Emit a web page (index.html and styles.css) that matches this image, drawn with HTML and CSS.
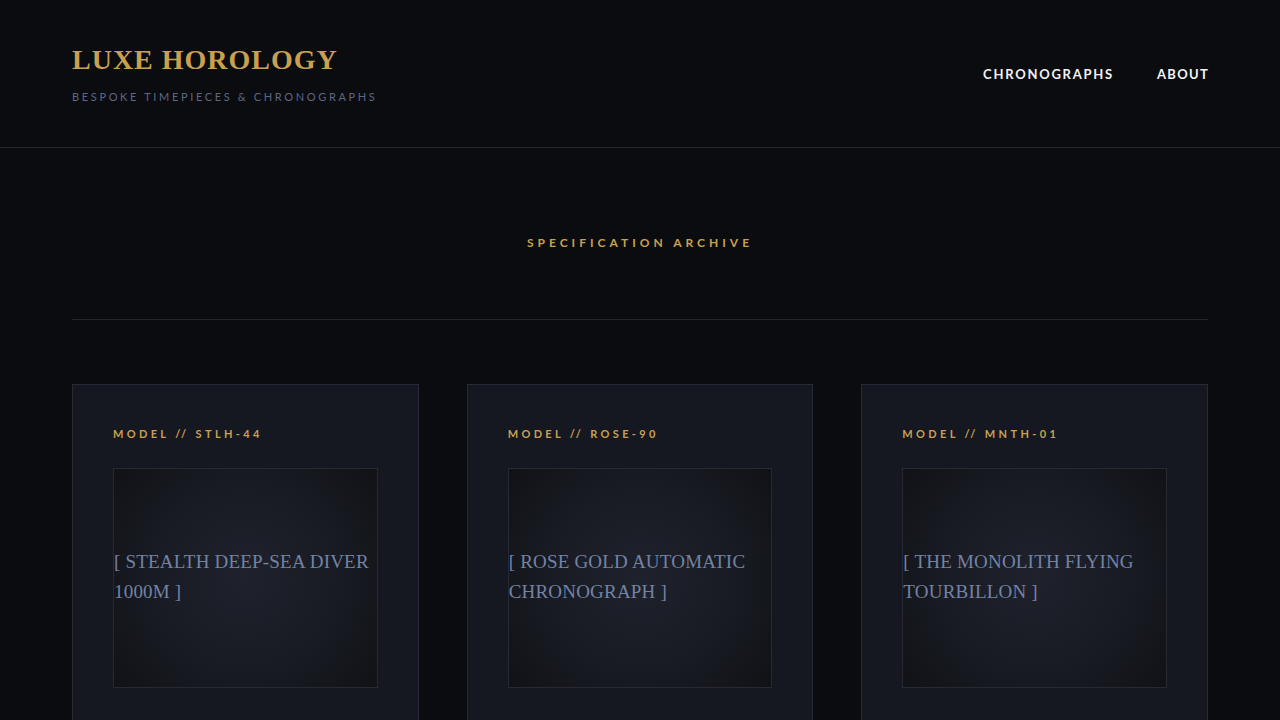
FILE: index.html
```html
<!DOCTYPE html>
<html lang="en">
<head>
<meta charset="utf-8">
<title>Luxe Horology</title>
<link rel="stylesheet" href="styles.css">
</head>
<body>
<header class="site-header">
  <div class="brand">
    <h1 class="brand-name">LUXE HOROLOGY</h1>
    <p class="brand-tag">BESPOKE TIMEPIECES &amp; CHRONOGRAPHS</p>
  </div>
  <nav class="main-nav">
    <a href="#" class="nav-link">CHRONOGRAPHS</a>
    <a href="#" class="nav-link">ABOUT</a>
  </nav>
</header>
<main class="archive">
  <h2 class="archive-title">SPECIFICATION ARCHIVE</h2>
  <hr class="archive-rule">
  <section class="card-grid">
    <article class="card">
      <div class="card-label">MODEL // STLH-44</div>
      <div class="card-visual"><span>[ STEALTH DEEP-SEA DIVER 1000M ]</span></div>
    </article>
    <article class="card">
      <div class="card-label">MODEL // ROSE-90</div>
      <div class="card-visual"><span>[ ROSE GOLD AUTOMATIC CHRONOGRAPH ]</span></div>
    </article>
    <article class="card">
      <div class="card-label">MODEL // MNTH-01</div>
      <div class="card-visual"><span>[ THE MONOLITH FLYING TOURBILLON ]</span></div>
    </article>
  </section>
</main>
</body>
</html>
```

FILE: styles.css
```css
* { box-sizing: border-box; }

html, body {
  margin: 0;
  padding: 0;
  background: #0b0c10;
  color: #e8e8ea;
  font-family: "Lato", "Liberation Sans", sans-serif;
}

.site-header {
  height: 148px;
  padding: 0 72px;
  display: flex;
  align-items: center;
  justify-content: space-between;
  border-bottom: 1px solid #24262c;
}

.brand-name {
  margin: 0;
  font-family: "Liberation Serif", "DejaVu Serif", serif;
  font-weight: 700;
  font-size: 28px;
  letter-spacing: 1px;
  color: #c9a050;
  line-height: 1;
  padding-top: 1px;
}

.brand-tag {
  margin: 16px 0 0;
  font-size: 11px;
  letter-spacing: 2.65px;
  color: #5c6784;
}

.main-nav {
  display: flex;
  gap: 43px;
}

.nav-link {
  color: #f3f3f5;
  text-decoration: none;
  font-size: 13px;
  font-weight: 700;
  letter-spacing: 1.75px;
}

.nav-link:last-child {
  letter-spacing: 1.3px;
  margin-right: -1px;
}

.archive {
  padding: 0 72px;
}

.archive-title {
  margin: 0;
  padding-top: 88px;
  text-align: center;
  font-size: 12px;
  font-weight: 700;
  letter-spacing: 4px;
  color: #c9a050;
  line-height: 14px;
}

.archive-rule {
  margin: 69px 0 0;
  border: 0;
  border-top: 1px solid #24262c;
}

.card-grid {
  margin-top: 64px;
  display: grid;
  grid-template-columns: repeat(3, 1fr);
  gap: 48px;
}

.card {
  background: #151821;
  border: 1px solid #262a34;
  padding: 40px;
}

.card-label {
  font-size: 11px;
  font-weight: 700;
  letter-spacing: 3.35px;
  color: #c9a050;
  line-height: 18px;
}

.card-visual {
  margin-top: 25px;
  height: 220px;
  padding-bottom: 2px;
  display: flex;
  align-items: center;
  border: 1px solid #262a34;
  background: radial-gradient(circle at center, #1f222c 0%, #181b23 55%, #111216 100%);
}

.card-visual span {
  font-family: "Liberation Serif", "DejaVu Serif", serif;
  font-size: 19px;
  line-height: 30px;
  letter-spacing: 0.2px;
  color: #7383a3;
}
```
